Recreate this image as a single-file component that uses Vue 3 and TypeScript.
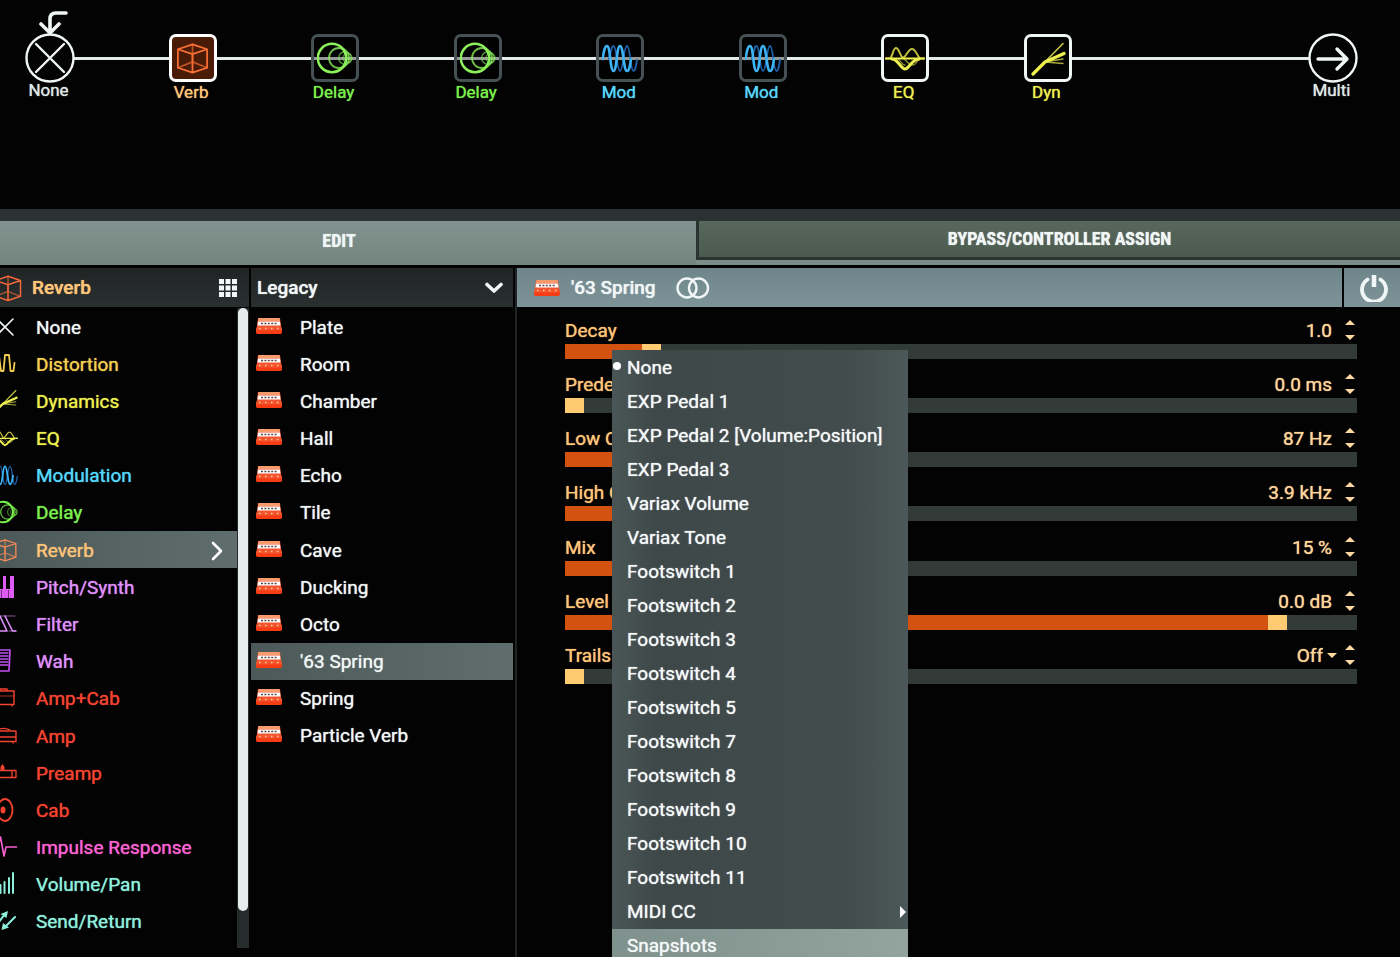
<script setup lang="ts">
import { ref } from 'vue'

interface Block { label: string; icon: string; tone: string; state: 'selected' | 'off' | 'on' }
interface Category { label: string; icon: string; tone: string }
interface Param { label: string; value: string; position: number; options?: string[] }

const blocks: Block[] = [
  { label: 'Verb', icon: 'verb', tone: 'verb', state: 'selected' },
  { label: 'Delay', icon: 'delay', tone: 'delay', state: 'off' },
  { label: 'Delay', icon: 'delay', tone: 'delay', state: 'off' },
  { label: 'Mod', icon: 'mod', tone: 'mod', state: 'off' },
  { label: 'Mod', icon: 'mod', tone: 'mod', state: 'off' },
  { label: 'EQ', icon: 'eq', tone: 'dyn', state: 'on' },
  { label: 'Dyn', icon: 'dyn', tone: 'dyn', state: 'on' },
]

const categories: Category[] = [
  { label: 'None', icon: 'none', tone: 'plain' },
  { label: 'Distortion', icon: 'dist', tone: 'dist' },
  { label: 'Dynamics', icon: 'dyn', tone: 'dyn' },
  { label: 'EQ', icon: 'eq', tone: 'dyn' },
  { label: 'Modulation', icon: 'mod', tone: 'mod' },
  { label: 'Delay', icon: 'delay', tone: 'delay' },
  { label: 'Reverb', icon: 'verb', tone: 'verb' },
  { label: 'Pitch/Synth', icon: 'pitch', tone: 'pitch' },
  { label: 'Filter', icon: 'filter', tone: 'pitch' },
  { label: 'Wah', icon: 'wah', tone: 'pitch' },
  { label: 'Amp+Cab', icon: 'ampcab', tone: 'amp' },
  { label: 'Amp', icon: 'amp', tone: 'amp' },
  { label: 'Preamp', icon: 'preamp', tone: 'amp' },
  { label: 'Cab', icon: 'cab', tone: 'amp' },
  { label: 'Impulse Response', icon: 'ir', tone: 'ir' },
  { label: 'Volume/Pan', icon: 'vol', tone: 'vol' },
  { label: 'Send/Return', icon: 'send', tone: 'vol' },
]

const models = ['Plate', 'Room', 'Chamber', 'Hall', 'Echo', 'Tile', 'Cave', 'Ducking', 'Octo', "'63 Spring", 'Spring', 'Particle Verb']

const params = ref<Param[]>([
  { label: 'Decay', value: '1.0', position: 10 },
  { label: 'Predelay', value: '0.0 ms', position: 0 },
  { label: 'Low Cut', value: '87 Hz', position: 15 },
  { label: 'High Cut', value: '3.9 kHz', position: 20 },
  { label: 'Mix', value: '15 %', position: 15 },
  { label: 'Level', value: '0.0 dB', position: 91 },
  { label: 'Trails', value: 'Off', position: 0, options: ['Off', 'On'] },
])

const controllers = [
  'None', 'EXP Pedal 1', 'EXP Pedal 2 [Volume:Position]', 'EXP Pedal 3', 'Variax Volume', 'Variax Tone',
  'Footswitch 1', 'Footswitch 2', 'Footswitch 3', 'Footswitch 4', 'Footswitch 5', 'Footswitch 7',
  'Footswitch 8', 'Footswitch 9', 'Footswitch 10', 'Footswitch 11', 'MIDI CC', 'Snapshots',
]

const category = ref('Reverb')
const model = ref("'63 Spring")
const controller = ref('None')
const hovered = ref('Snapshots')

function nudge(p: Param, by: number) {
  p.position = Math.min(100, Math.max(0, p.position + by))
}
</script>

<template>
  <div class="editor">
    <svg class="defs" aria-hidden="true">
      <symbol id="i-verb" viewBox="0 0 36 36">
        <path d="M3 28 18 22 33 28M18 4V22" opacity=".65" />
        <path d="M18 4 33 9V28L18 33 3 28V9ZM3 9 18 14 33 9M18 14V33" />
      </symbol>
      <symbol id="i-delay" viewBox="0 0 36 36">
        <circle cx="15" cy="18" r="14.200" stroke-width="2.600" />
        <circle cx="22" cy="18" r="10" stroke-width="1.800" opacity=".8" />
        <circle cx="28" cy="18" r="6.300" stroke-width="1.500" opacity=".6" />
        <circle cx="30.500" cy="18" r="4.500" stroke-width="1.400" opacity=".5" />
      </symbol>
      <symbol id="i-mod" viewBox="0 0 36 36">
        <path d="M7 19C9 10 10 6 11.500 6C15 6 14.500 31 18 31C21.500 31 21.500 6 25 6C28.500 6 28 31 31.500 31C33.500 31 34 26 35 20" stroke="#1f62ad" stroke-width="1.800" />
        <path d="M.5 19C2 10 3 6 5 6C8.500 6 8 31 11.500 31C15 31 14.500 6 18 6C21.500 6 21.500 31 25 31C27.500 31 28 25 29 19" stroke="#3fb4f5" stroke-width="2.600" />
      </symbol>
      <symbol id="i-eq" viewBox="0 0 40 36">
        <path d="M0 18.500H5C8 16 8 8 11 8C14 8 15 16 18 18C22 16 23 9 27 9C31 9 32 16 35 18.500H40" stroke-width="2" opacity=".8" />
        <path d="M19 19C22 21 24 25 28 25C31 25 32 20 35 18.500M13 19C16 21 17 25 20 25" stroke-width="1.400" opacity=".6" />
        <path d="M1 18.500H39" stroke-width="2" />
        <path d="M7 19C13 19 16 29 20 29C24 29 27 19 34 19" stroke-width="3" />
      </symbol>
      <symbol id="i-dyn" viewBox="0 0 36 36">
        <path d="M15 22 33 3.500" stroke-width="1.600" opacity=".85" />
        <path d="M15 22 33 19M15 22 33 23.500" stroke-width="1.400" opacity=".7" />
        <path d="M3 34 15 22 34 13.500" stroke-width="3.200" />
      </symbol>
      <symbol id="i-none" viewBox="0 0 26 26"><path d="M5 5 21 21M5 21 21 5" stroke-width="1.600" /></symbol>
      <symbol id="i-dist" viewBox="0 0 26 26"><path d="M1 20 3 5H7L9 20H11.500L13 4H17L18.500 20H21.500L22.500 12" stroke-width="1.800" /></symbol>
      <symbol id="i-pitch" viewBox="0 0 26 26">
        <path d="M3 2H7V15H11V2H14V15H18V2H22V24H16.500V16H16V24H10V16H9.500V24H1V15H3Z" fill="#dc5cf5" stroke="none" />
      </symbol>
      <symbol id="i-filter" viewBox="0 0 26 26">
        <path d="M0 5H23M17 20H23.500" stroke-width="1.200" opacity=".6" />
        <path d="M8 5 15 20H8M13 5 20.500 20H24" stroke-width="1.600" />
      </symbol>
      <symbol id="i-wah" viewBox="0 0 26 26">
        <path d="M5 2H18L17 23H6Z" stroke="#c050f0" stroke-width="1.700" />
        <path d="M6 5H16M6 8H16M6 11H16M6 14H16M7 17H16" stroke="#c050f0" stroke-width="1.400" />
      </symbol>
      <symbol id="i-ampcab" viewBox="0 0 26 26">
        <path d="M0 6H22V19.500H0M8 6V4H15V6M20 21V20" stroke-width="1.400" /><path d="M0 11H22" stroke-width="1.200" opacity=".7" />
      </symbol>
      <symbol id="i-amp" viewBox="0 0 26 26">
        <path d="M0 8H24V18.500H0M0 14H24M21 20V19" stroke-width="1.400" /><path d="M6 7C9 5 14 5 18 7" stroke-width="1.200" />
      </symbol>
      <symbol id="i-preamp" viewBox="0 0 26 26">
        <path d="M0 10.500H24V17.500H0M20 10.500V17.500" stroke-width="1.300" /><path d="M8.500 10.500V7L10.500 4 12.500 7V10.500Z" fill="currentColor" stroke="none" />
      </symbol>
      <symbol id="i-cab" viewBox="0 0 26 26">
        <ellipse cx="13" cy="13" rx="7.500" ry="11" stroke-width="1.800" /><ellipse cx="11" cy="13" rx="2.500" ry="3.500" fill="currentColor" stroke="none" />
      </symbol>
      <symbol id="i-ir" viewBox="0 0 26 26"><path d="M0 13H6L8.500 3 12 22 14 13H24.500" stroke-width="1.600" /></symbol>
      <symbol id="i-vol" viewBox="0 0 26 26"><path d="M8.500 22V14M12.500 22V11M17 22V7M21 22V2" stroke-width="2" /></symbol>
      <symbol id="i-send" viewBox="0 0 26 26">
        <path d="M3 19 13 6M23 9 12 20" stroke-width="2" /><path d="M8.500 6 16 3 14.500 10ZM9.500 22 11 15 17 19.500Z" fill="currentColor" stroke="none" />
      </symbol>
      <symbol id="i-unit" viewBox="0 0 28 18">
        <path d="M3 1H25L26 9 27 12V16L25 17H3L1 16V12L2 9Z" fill="#f4552c" stroke="none" />
        <path d="M3.500 1H24.500L25 4H3Z" fill="#f79a6c" stroke="none" />
        <path d="M3 4.500H25L25.500 8.500H2.500Z" fill="#fff" stroke="none" />
        <path d="M6 6.500H23" stroke="#5b4a46" stroke-width="1.600" stroke-linecap="butt" stroke-dasharray="2 1.400" />
        <path d="M4 11.500H25" stroke="#ffc9a8" stroke-width="1.500" stroke-linecap="butt" stroke-dasharray="1.500 4.500" />
        <path d="M1 13.500H27V16L25 17H3L1 16Z" fill="#f53c14" stroke="none" />
      </symbol>
    </svg>

    <section class="chain" aria-label="Signal chain">
      <div class="wire"></div>
      <button class="node">
        <svg class="entry" viewBox="0 0 30 24" aria-hidden="true"><path d="M28 2H18Q12 2 12 8V22M3 13 12 22 21 13" stroke-width="3.600" /></svg>
        <svg class="end" viewBox="0 0 50 50" aria-hidden="true"><circle cx="25" cy="25" r="23.500" fill="#030303" stroke-width="2.400" /><path d="M11 11 39 39M11 39 39 11" stroke-width="2.400" /></svg>
        <span class="node-label end-label">None</span>
      </button>
      <button v-for="(b, i) in blocks" :key="i" class="node" :class="b.tone">
        <span class="tile" :class="b.state"><svg class="glyph" :class="'g-' + b.icon" aria-hidden="true"><use :href="'#i-' + b.icon" /></svg></span>
        <span class="node-label">{{ b.label }}</span>
      </button>
      <div class="node vacant"></div>
      <button class="node">
        <svg class="end" viewBox="0 0 50 50" aria-hidden="true"><circle cx="25" cy="25" r="23.500" fill="#030303" stroke-width="2.400" /><path d="M10 26H39M29 16 39 26 29 36" stroke-width="3.400" /></svg>
        <span class="node-label end-label">Multi</span>
      </button>
    </section>

    <nav class="tabs">
      <button class="tab active">EDIT</button>
      <button class="tab">BYPASS/CONTROLLER ASSIGN</button>
    </nav>

    <main class="panels">
      <section class="col categories">
        <header class="bar verb">
          <svg class="head-cube" aria-hidden="true"><use href="#i-verb" /></svg>
          <h2>Reverb</h2>
          <button class="grid-btn" aria-label="Grid view">
            <svg viewBox="0 0 18 18" aria-hidden="true"><path d="M0 0h5v5H0zM6.500 0h5v5h-5zM13 0h5v5h-5zM0 6.500h5v5H0zM6.500 6.500h5v5h-5zM13 6.500h5v5h-5zM0 13h5v5H0zM6.500 13h5v5h-5zM13 13h5v5h-5z" fill="#f2f8f7" stroke="none" /></svg>
          </button>
        </header>
        <div class="cat-body">
          <div class="list cat-list">
            <button v-for="c in categories" :key="c.label" class="row" :class="[c.tone, { current: c.label === category }]" @click="category = c.label">
              <svg class="cat-icon" aria-hidden="true"><use :href="'#i-' + c.icon" /></svg>
              <span>{{ c.label }}</span>
              <svg v-if="c.label === category" class="chev" viewBox="0 0 12 20" aria-hidden="true"><path d="M2 2 10 10 2 18" stroke-width="2.600" /></svg>
            </button>
          </div>
          <div class="scroll"><div class="scroll-thumb"></div></div>
        </div>
      </section>

      <section class="col models">
        <div class="bar picker">
          <select aria-label="Model group"><option>Legacy</option></select>
          <svg viewBox="0 0 18 12" aria-hidden="true"><path d="M2 2.500 9 9 16 2.500" stroke-width="3.600" /></svg>
        </div>
        <div class="list model-list">
          <button v-for="m in models" :key="m" class="row model" :class="{ current: m === model }" @click="model = m">
            <svg class="unit" aria-hidden="true"><use href="#i-unit" /></svg>
            <span>{{ m }}</span>
          </button>
        </div>
      </section>

      <section class="detail">
        <header class="detail-head">
          <div class="detail-title">
            <svg class="unit" aria-hidden="true"><use href="#i-unit" /></svg>
            <h2>'63 Spring</h2>
            <svg class="stereo" viewBox="0 0 34 22" aria-hidden="true"><circle cx="11" cy="11" r="9.500" stroke-width="2.400" /><circle cx="22.500" cy="11" r="9.500" stroke-width="2.400" /></svg>
          </div>
          <button class="power" aria-label="Bypass">
            <svg viewBox="0 0 28 28" aria-hidden="true"><path d="M7.500 5.500A12 12 0 1 0 20.500 5.500" stroke-width="3.800" /><path d="M14 1V13" stroke-width="4.600" stroke-linecap="butt" /></svg>
          </button>
        </header>

        <div class="params">
          <div v-for="(p, i) in params" :key="p.label" class="param">
            <div class="param-head">
              <label :for="'p' + i">{{ p.label }}</label>
              <span v-if="p.options" class="choice">
                <select v-model="p.value" :aria-label="p.label + ' setting'"><option v-for="o in p.options" :key="o">{{ o }}</option></select>
                <i class="tri down"></i>
              </span>
              <output v-else :for="'p' + i">{{ p.value }}</output>
              <span class="spin">
                <button :aria-label="'Raise ' + p.label" @click="nudge(p, 1)"><i class="tri up"></i></button>
                <button :aria-label="'Lower ' + p.label" @click="nudge(p, -1)"><i class="tri down"></i></button>
              </span>
            </div>
            <input :id="'p' + i" v-model.number="p.position" type="range" min="0" max="100" :style="{ '--fill': p.position + '%' }" />
          </div>
        </div>

        <div class="menu" role="menu">
          <button v-for="c in controllers" :key="c" class="item" role="menuitem" :class="{ checked: c === controller, hover: c === hovered, sub: c === 'MIDI CC' }" @mouseenter="hovered = c" @click="controller = c">{{ c }}</button>
        </div>
      </section>
    </main>
  </div>
</template>

<style>
body { margin: 0; background: #030303; }
</style>

<style scoped>
.editor {
  display: flex;
  flex-direction: column;
  height: 100vh;
  overflow: hidden;
  background: #030303;
  color: #f0f6f5;
  font: 400 19px/24px Roboto, "Liberation Sans", sans-serif;
  text-shadow: 0 0 1px currentColor;
}
.defs { position: absolute; width: 0; height: 0; }
button, select { font: inherit; color: inherit; text-shadow: inherit; background: none; border: 0; padding: 0; margin: 0; border-radius: 0; text-align: left; appearance: none; outline: 0; }
select option { color: #f0f6f5; background: #3f4849; }
h2 { margin: 0; font: inherit; }
svg { fill: none; stroke: currentColor; stroke-width: 1.8; stroke-linecap: round; stroke-linejoin: round; display: block; flex: none; }

.plain { color: #f0f6f5; }
.dist { color: #f4ce50; }
.dyn { color: #edf04e; }
.mod { color: #54d8fb; }
.delay { color: #7af24c; }
.verb { color: #ffc578; }
.pitch { color: #df8ffb; }
.amp { color: #f4432f; }
.ir { color: #fb62d2; }
.vol { color: #8cf0dc; }

.chain { position: relative; display: flex; justify-content: space-between; height: 209px; padding: 0 31px 0 14px; flex: none; }
.wire { position: absolute; top: 57px; left: 50px; right: 68px; height: 3px; background: #e3eae9; }
.node { position: relative; width: 72px; display: flex; flex-direction: column; align-items: center; padding-top: 34px; height: 110px; }
.tile { box-sizing: border-box; width: 48px; height: 48px; border: 3px solid #f0f6f5; border-radius: 7px; display: grid; place-items: center; background: #030303; }
.tile.off { border-color: #465153; background: rgba(3, 3, 3, 0.35); }
.tile.selected { border-color: #fff; background: #4a1c08; color: #fb7035; }
.glyph { width: 36px; height: 36px; }
.g-eq { width: 40px; }
.g-verb { width: 35px; }
.tile.off .g-delay { color: #8cf05a; }
.node-label { padding-right: 3px; font-size: 17px; line-height: 20px; }
.end { width: 50px; height: 50px; margin-top: -1px; }
.end-label { margin-top: -3px; color: #dfe8e6; }
.entry { position: absolute; top: 11px; left: 24px; width: 30px; height: 24px; }

.tabs { display: grid; grid-template-columns: 696fr 704fr; border-top: 12px solid #2c3231; border-bottom: 3px solid #030303; background: #7b8d89; height: 44px; flex: none; }
.tab { text-align: center; font: 700 18px/36px "Roboto Condensed", "Liberation Sans Narrow", "Liberation Sans", sans-serif; }
.tab.active { background: linear-gradient(#82938f, #73857f); padding-right: 18px; padding-bottom: 4px; }
.tab:not(.active) { align-self: start; box-sizing: border-box; height: 39px; padding-left: 20px; border-left: 3px solid #2b3331; border-bottom: 3px solid #2b3331; background: linear-gradient(#59685d, #4b5a4e); }

.panels { display: grid; grid-template-columns: 249px 262px 1fr; column-gap: 2px; flex: 1; min-height: 0; }
.bar { display: flex; align-items: center; height: 39px; background: linear-gradient(#202424, #2a2f2f); }
.bar, .detail-head { font-weight: 500; }
.head-cube { width: 30px; height: 30px; margin-left: -7px; margin-right: 9px; color: #f4683a; }
.grid-btn { margin-left: auto; margin-right: 12px; color: #f2f8f7; }
.grid-btn svg { width: 18px; height: 18px; }
.cat-body { display: flex; align-items: flex-start; }
.list { flex: 1; padding-top: 1px; display: grid; grid-auto-rows: 1fr; }
.cat-list { height: 632px; }
.model-list { height: 446px; }
.row { display: flex; align-items: center; padding-top: 2px; box-sizing: border-box; }
.row.current { background: linear-gradient(90deg, #4c5958, #5f6e6c); }
.cat-icon { width: 26px; height: 26px; margin-left: -8px; margin-right: 18px; margin-bottom: 2px; }
.row.verb .cat-icon { color: #f58a58; }
.chev { width: 12px; height: 20px; margin-left: auto; margin-right: 14px; color: #fff; }
.scroll { width: 12px; height: 640px; margin-top: 1px; background: #262c2b; }
.scroll-thumb { height: 603px; margin: 0 1px; border-radius: 5px; background: #e5eceb; }
.categories { overflow: hidden; }
.picker { display: grid; grid-template-columns: 1fr 34px; }
.picker select { grid-area: 1 / 1 / 2 / 3; height: 39px; padding-left: 6px; }
.picker svg { grid-area: 1 / 2; width: 18px; height: 12px; pointer-events: none; margin-left: 6px; }
.model { padding-left: 4px; }
.unit { width: 28px; height: 18px; }
.model .unit { margin-right: 17px; margin-bottom: 4px; }

.detail { position: relative; border-left: 2px solid #1f2424; }
.detail-head { display: flex; gap: 2px; height: 39px; }
.detail-title { flex: 1; display: flex; align-items: center; padding-left: 16px; background: linear-gradient(#6e868a, #7d9398); }
.detail-title .unit { margin-right: 10px; }
.stereo { width: 34px; height: 22px; margin-left: 20px; }
.power { width: 56px; display: flex; align-items: center; justify-content: center; padding-left: 4px; box-sizing: border-box; background: linear-gradient(#6e868a, #7d9398); }
.power svg { width: 28px; height: 28px; }

.params { display: grid; grid-auto-rows: 1fr; height: 379px; padding: 11px 43px 0 48px; color: #ffc578; }
.param-head { display: flex; align-items: center; height: 26px; }
.param-head output, .choice { margin-left: auto; color: #ffd59a; }
.param-head output { margin-right: 11px; }
.choice { display: flex; align-items: center; gap: 4px; margin-right: 6px; }
.choice select { field-sizing: content; }
.spin { display: flex; flex-direction: column; gap: 10px; width: 14px; padding-bottom: 2px; }
.spin button { display: grid; place-items: center; height: 5px; }
.tri { width: 0; height: 0; border: 5px solid transparent; }
.tri.up { border-top: 0; border-bottom-color: #ffd9a2; }
.tri.down { border-bottom: 0; border-top-color: #ffd9a2; }
.param input { display: block; appearance: none; width: 100%; height: 15px; margin: 0; background: linear-gradient(90deg, #d4520f var(--fill), #333b39 var(--fill)); }
.param input::-webkit-slider-thumb { appearance: none; width: 19px; height: 15px; background: #ffcb72; border: 0; border-radius: 0; }

.menu { position: absolute; top: 82px; left: 95px; width: 296px; padding-top: 1px; display: flex; flex-direction: column; background: linear-gradient(90deg, #4a5656, #3f4849 15%, #434c4d 80%, #4c5858); }
.item { position: relative; height: 34px; line-height: 34px; padding-left: 15px; color: #f4f9f8; }
.item.hover { background: linear-gradient(90deg, #7f918c, #93a49f); }
.item.checked::before { content: ""; position: absolute; left: 1px; top: 11px; width: 8px; height: 8px; border-radius: 50%; background: #fff; }
.item.sub::after { content: ""; position: absolute; right: 2px; top: 11px; border: 6px solid transparent; border-left-color: #fff; border-right: 0; }
</style>
